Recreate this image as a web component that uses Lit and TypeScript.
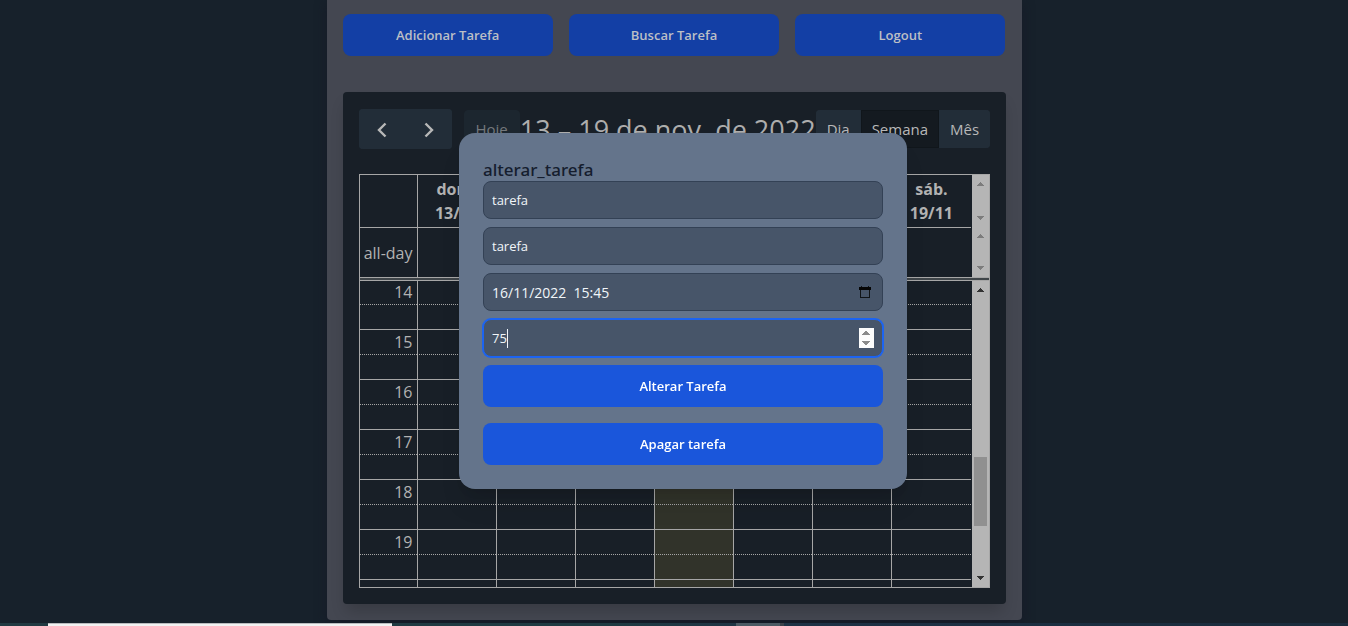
import { LitElement, html, css, svg, nothing } from "lit";
import { customElement, property, query } from "lit/decorators.js";
import { classMap } from "lit/directives/class-map.js";

const DAYS = [
  ["dom.", "13/11"],
  ["seg.", "14/11"],
  ["ter.", "15/11"],
  ["qua.", "16/11"],
  ["qui.", "17/11"],
  ["sex.", "18/11"],
  ["sáb.", "19/11"],
];
const TODAY = 3;
const HOURS = [14, 15, 16, 17, 18, 19];

@customElement("scroll-track")
export class ScrollTrack extends LitElement {
  @property({ type: Boolean, reflect: true }) active = false;

  static styles = css`
    :host {
      display: flex;
      flex-direction: column;
      justify-content: space-between;
      width: 17px;
      flex: none;
      box-sizing: border-box;
      margin-left: 1px;
      background: #b5b5b5;
      color: #7c7c7c;
    }
    :host([active]) {
      color: #333333;
    }
    svg {
      display: block;
      width: 17px;
      height: 17px;
      fill: currentColor;
    }
    .rail {
      flex: 1;
      display: grid;
      grid-template-rows: 158fr 69fr 44fr;
    }
    .thumb {
      grid-row: 2;
      margin: 0 2px;
      background: #909090;
    }
  `;

  render() {
    return html`
      <svg viewBox="0 0 17 17" aria-hidden="true" shape-rendering="crispEdges">
        <path d="M8 7h1v1h1v1h1v1h1v1H5v-1h1V9h1V8h1z" />
      </svg>
      ${this.active ? html`<div class="rail"><div class="thumb"></div></div>` : nothing}
      <svg viewBox="0 0 17 17" aria-hidden="true" shape-rendering="crispEdges">
        <path d="M5 6h7v1h-1v1h-1v1H9v1H8v-1H7V8H6V7H5z" />
      </svg>
    `;
  }
}

@customElement("week-calendar")
export class WeekCalendar extends LitElement {
  static styles = css`
    :host {
      display: block;
      padding: 17px 16px 16px;
      border-radius: 4px;
      background: #181f27;
      box-shadow: 0 10px 15px -3px rgba(0, 0, 0, 0.18);
      color: #b2b2b2;
      font-size: 15px;
      line-height: 24px;
    }
    .toolbar {
      display: flex;
      align-items: center;
      justify-content: space-between;
      height: 40px;
      margin-bottom: 25px;
    }
    .start {
      display: flex;
      align-items: center;
      gap: 12px;
    }
    .group {
      display: flex;
      border-radius: 4px;
      overflow: hidden;
    }
    button {
      box-sizing: border-box;
      height: 38px;
      margin: 0;
      padding: 0 10px;
      border: 1px solid #222d38;
      background: #222d38;
      color: #b8b8b8;
      font: inherit;
      white-space: nowrap;
    }
    .nav button {
      display: grid;
      place-items: center;
      width: 47px;
      height: 40px;
      padding-top: 2px;
    }
    .nav button + button {
      width: 46px;
    }
    .nav svg {
      width: 10px;
      height: 16px;
      fill: none;
      stroke: #b8b8b8;
      stroke-width: 2.4;
    }
    .today {
      padding: 0 11px;
      border-color: #1c262f;
      border-radius: 4px;
      background: #1c262f;
      color: #75797d;
    }
    .views .selected {
      border-color: #10161b;
      background: #141a20;
    }
    h2 {
      margin: 0;
      padding-top: 2px;
      color: #adadad;
      font-size: 27px;
      font-weight: 400;
      line-height: 40px;
      white-space: nowrap;
    }
    .grid {
      border: 1px solid #a6a6a6;
      font-size: 16px;
    }
    .band {
      display: flex;
      overflow: hidden;
    }
    .head {
      height: 52px;
    }
    .allday {
      height: 50px;
    }
    .divider {
      height: 2px;
      border: 1px solid #a6a6a6;
      border-width: 1px 0;
      background: #3f4549;
    }
    .slots {
      height: 306px;
    }
    table {
      flex: 1;
      min-width: 0;
      width: 100%;
      height: max-content;
      table-layout: fixed;
      border-collapse: separate;
      border-spacing: 0;
    }
    th,
    td {
      box-sizing: border-box;
      padding: 0;
      border-left: 1px solid #a6a6a6;
    }
    tr > :first-child {
      width: 57px;
      padding-right: 4px;
      border-left: 0;
      font-weight: 400;
      text-align: right;
    }
    .head th {
      height: 52px;
      padding: 2px 0;
      font-weight: 700;
      text-align: center;
    }
    .allday th,
    .allday td {
      height: 50px;
      border-top: 1px solid #a6a6a6;
    }
    .allday th {
      white-space: nowrap;
    }
    .slots th,
    .slots td {
      height: 25px;
      border-top: 1px solid #a6a6a6;
      line-height: 24px;
    }
    .slots .half > * {
      border-top-style: dotted;
    }
    .slots tr:first-child > * {
      height: 23px;
      border-top: 0;
      line-height: 22px;
      vertical-align: top;
    }
    .slots .now {
      background: #31332a;
    }
  `;

  private cells() {
    return DAYS.map((_, i) => html`<td class=${classMap({ now: i === TODAY })}></td>`);
  }

  render() {
    return html`
      <div class="toolbar">
        <div class="start">
          <div class="group nav">
            <button type="button" aria-label="Anterior">
              <svg viewBox="0 0 10 16"><path d="M8.5 1.5 2 8l6.500 6.500" /></svg>
            </button>
            <button type="button" aria-label="Próximo">
              <svg viewBox="0 0 10 16"><path d="M1.500 1.500 8 8l-6.500 6.500" /></svg>
            </button>
          </div>
          <button type="button" class="today" disabled>Hoje</button>
        </div>
        <h2>13 – 19 de nov. de 2022</h2>
        <div class="group views">
          <button type="button">Dia</button>
          <button type="button" class="selected">Semana</button>
          <button type="button">Mês</button>
        </div>
      </div>
      <div class="grid">
        <div class="band head">
          <table>
            <tbody>
              <tr>
                <td></td>
                ${DAYS.map(([name, date]) => html`<th scope="col">${name}<br />${date}</th>`)}
              </tr>
            </tbody>
          </table>
          <scroll-track></scroll-track>
        </div>
        <div class="band allday">
          <table>
            <tbody>
              <tr>
                <th scope="row">all-day</th>
                ${DAYS.map(() => html`<td></td>`)}
              </tr>
            </tbody>
          </table>
          <scroll-track></scroll-track>
        </div>
        <div class="divider"></div>
        <div class="band slots">
          <table>
            <tbody>
              ${HOURS.map(
                (h) => html`
                  <tr>
                    <th scope="row">${h}</th>
                    ${this.cells()}
                  </tr>
                  <tr class="half">
                    <td></td>
                    ${this.cells()}
                  </tr>
                `
              )}
              <tr>
                <td></td>
                ${this.cells()}
              </tr>
            </tbody>
          </table>
          <scroll-track active></scroll-track>
        </div>
      </div>
    `;
  }
}

@customElement("task-dialog")
export class TaskDialog extends LitElement {
  @query("#duration") private duration!: HTMLInputElement;

  static styles = css`
    :host {
      display: block;
      width: 448px;
    }
    form {
      display: flex;
      flex-direction: column;
      gap: 8px;
      padding: 24px;
      border-radius: 16px;
      background: #64748b;
      box-shadow: 0 20px 25px -5px rgba(0, 0, 0, 0.1), 0 8px 10px -6px rgba(0, 0, 0, 0.1);
    }
    h3 {
      margin: 0 0 -10px;
      color: #151d2e;
      font-family: "Noto Sans", "Open Sans", sans-serif;
      font-size: 17px;
      font-weight: 500;
      line-height: 26px;
    }
    .field {
      display: grid;
      align-items: center;
    }
    .field > * {
      grid-area: 1 / 1;
    }
    input {
      box-sizing: border-box;
      width: 100%;
      height: 38px;
      margin: 0;
      padding: 0 8px;
      border: 1px solid #334155;
      border-radius: 8px;
      outline: 0;
      background: #475569;
      color: #f1f5f9;
      font: inherit;
      font-size: 13px;
    }
    .date {
      font-size: 14px;
    }
    input:focus {
      border-color: #1c64f2;
      box-shadow: 0 0 0 1px #1c64f2;
    }
    #duration {
      caret-color: transparent;
    }
    input[type="number"]::-webkit-inner-spin-button {
      opacity: 1;
      height: 20px;
    }
    .caret {
      width: 1px;
      height: 19px;
      margin-left: 24px;
      background: #f1f5f9;
      pointer-events: none;
    }
    .picker {
      justify-self: end;
      display: block;
      margin-right: 12px;
      padding: 0;
      border: 0;
      background: none;
    }
    .picker svg {
      display: block;
      width: 12px;
      height: 13px;
    }
    .action {
      height: 42px;
      border: 0;
      border-radius: 8px;
      background: #1a56db;
      color: #ffffff;
      font: inherit;
      font-size: 13px;
      font-weight: 600;
    }
    .action + .action {
      margin-top: 8px;
    }
  `;

  firstUpdated() {
    this.duration.focus();
  }

  render() {
    return html`
      <form role="dialog" aria-labelledby="title">
        <h3 id="title">alterar_tarefa</h3>
        <input type="text" aria-label="Título" .value=${"tarefa"} />
        <input type="text" aria-label="Descrição" .value=${"tarefa"} />
        <div class="field">
          <input class="date" type="text" aria-label="Data" .value=${"16/11/2022  15:45"} />
          <button type="button" class="picker" aria-label="Abrir calendário">
            ${svg`<svg viewBox="0 0 12 13" shape-rendering="crispEdges">
              <path d="M1 1h1V0h1v1h6V0h1v1h1v11H1zM2 4v7h8V4z" fill="#101418" fill-rule="evenodd" />
              <path d="M0 1h12v3H0z" fill="#050505" />
            </svg>`}
          </button>
        </div>
        <div class="field">
          <input id="duration" type="number" aria-label="Duração" .value=${"75"} />
          <span class="caret" aria-hidden="true"></span>
        </div>
        <button type="button" class="action">Alterar Tarefa</button>
        <button type="button" class="action">Apagar tarefa</button>
      </form>
    `;
  }
}

@customElement("app-root")
export class AppRoot extends LitElement {
  static styles = css`
    :host {
      position: relative;
      display: flex;
      flex-direction: column;
      min-height: 100vh;
      overflow: hidden;
      background: #17212b;
      font-family: "Open Sans", "Noto Sans", sans-serif;
    }
    main {
      box-sizing: border-box;
      width: 100%;
      max-width: 695px;
      margin: 0 auto;
      padding: 14px 16px 16px;
      border-radius: 0 0 4px 4px;
      background: #444751;
      box-shadow: 0 4px 12px rgba(22, 22, 36, 0.6);
    }
    nav {
      display: grid;
      grid-template-columns: repeat(3, 1fr);
      gap: 16px;
      margin-bottom: 36px;
    }
    nav button {
      height: 42px;
      padding: 0;
      border: 0;
      border-radius: 8px;
      background: #133fa5;
      color: #bcbfc6;
      font: inherit;
      font-size: 13px;
      font-weight: 600;
    }
    .overlay {
      position: absolute;
      inset: 0 0 4px 0;
      display: grid;
      place-items: center;
      padding-left: 18px;
    }
    .taskbar {
      display: flex;
      height: 3px;
      margin-top: auto;
      background: linear-gradient(90deg, #213a42, #1f3a42 45%, #1d3145 60%, #1a2c3c);
    }
    .search {
      width: 344px;
      margin-left: 48px;
      box-sizing: border-box;
      border-top: 1px solid #b9bdbf;
      background: #f2f2f2;
    }
    .window {
      width: 44px;
      margin-left: 344px;
      border-right: 4px solid #3a4149;
      background: #4b5a64;
    }
  `;

  render() {
    return html`
      <main>
        <nav>
          <button type="button">Adicionar Tarefa</button>
          <button type="button">Buscar Tarefa</button>
          <button type="button">Logout</button>
        </nav>
        <week-calendar></week-calendar>
      </main>
      <div class="taskbar">
        <div class="search"></div>
        <div class="window"></div>
      </div>
      <div class="overlay"><task-dialog></task-dialog></div>
    `;
  }
}
